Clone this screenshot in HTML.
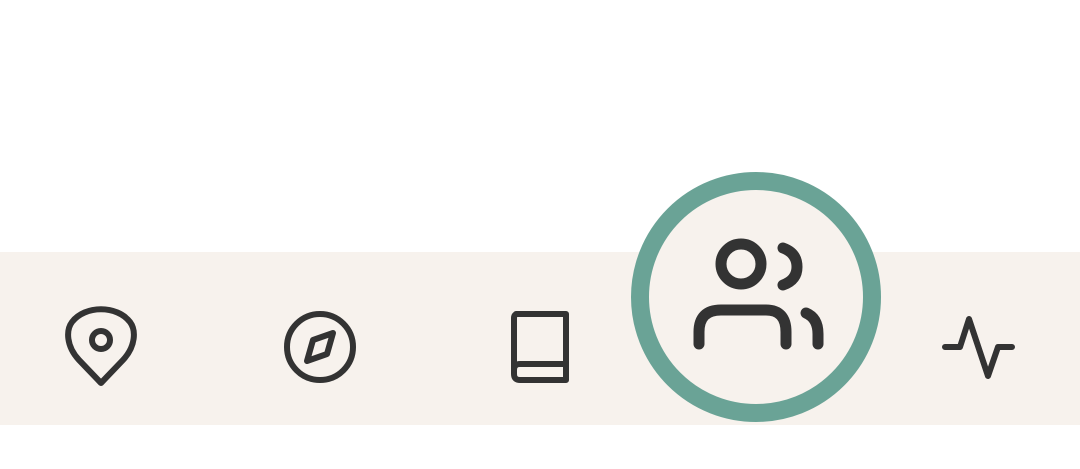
<!DOCTYPE html>
<html><head><style>
body{margin:0;width:1080px;height:469px;background:#fff;position:relative;overflow:hidden}
.bar{position:absolute;left:0;top:252px;width:1080px;height:173px;background:#f7f2ed}
svg{position:absolute;left:0;top:0}
</style></head><body>
<div class="bar"></div>
<svg width="1080" height="469" viewBox="0 0 1080 469" fill="none" stroke="#333" stroke-linecap="round" stroke-linejoin="round">
<circle cx="756" cy="297" r="116" fill="#f7f2ed" stroke="#6aa396" stroke-width="18"/>
<!-- pin -->
<path d="M101 383 L79 360 C66 346 66 330 72 322 C85 305 117 305 130 322 C136 330 136 346 123 360 Z" stroke-width="6"/>
<circle cx="101" cy="340" r="9" stroke-width="6"/>
<!-- compass -->
<circle cx="320" cy="347" r="33" stroke-width="6"/>
<path d="M333 333 L327 354 L307 361 L313 340 Z" stroke-width="6"/>
<!-- book -->
<path d="M516 314 H566 V380 H520 Q514 380 514 374 V318 Q514 314 518 314 Z" stroke-width="6"/>
<path d="M514 370 Q514 364 520 364 H566" stroke-width="6"/>
<!-- people -->
<circle cx="741" cy="264" r="20" stroke-width="11"/>
<path d="M699 344 V332 Q699 310 721 310 H766 Q786 310 786 332 V344" stroke-width="11"/>
<path d="M783 248 Q797 253 797 267 Q797 280 783 285" stroke-width="11"/>
<path d="M806 313 Q818 318 818 334 V344" stroke-width="11"/>
<!-- activity -->
<polyline points="945,347 960,347 969,319 988,376 998,347 1012,347" stroke-width="6"/>
</svg>
</body></html>
